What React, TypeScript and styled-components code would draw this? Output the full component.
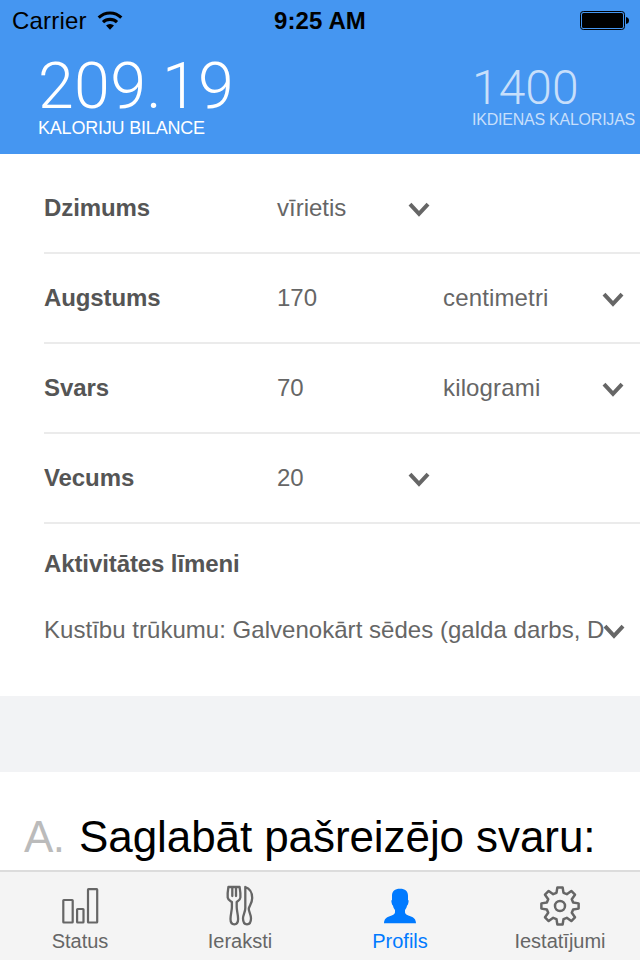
import React from "react";
import styled, { createGlobalStyle } from "styled-components";

const GlobalStyle = createGlobalStyle`
  * { box-sizing: border-box; }
  body {
    margin: 0;
    background: #fff;
    font-family: "Liberation Sans", Arial, sans-serif;
    -webkit-font-smoothing: antialiased;
  }
`;

const Screen = styled.div`
  width: 640px;
  height: 960px;
  display: flex;
  flex-direction: column;
  overflow: hidden;
  background: #fff;
`;

const Header = styled.header`
  flex: none;
  height: 154px;
  background: #4596f1;
  color: #fff;
`;

const StatusBar = styled.div`
  height: 41px;
  padding: 1px 12px 0;
  display: grid;
  grid-template-columns: 1fr auto 1fr;
  align-items: center;
  color: #000;
  font-size: 24px;
  line-height: 40px;
`;

const Carrier = styled.div`
  display: flex;
  align-items: center;
  gap: 10px;
  letter-spacing: 0.2px;
`;

const Clock = styled.div`
  font-weight: 700;
  font-size: 24px;
  letter-spacing: 0.1px;
`;

const BatterySlot = styled.div`
  display: flex;
  justify-content: flex-end;
  margin-right: -2px;
`;

const Balance = styled.div`
  display: flex;
  justify-content: space-between;
  padding: 0 5px 0 38px;
  white-space: nowrap;
`;

const Stat = styled.div<{ $daily?: boolean }>`
  color: ${(p) => (p.$daily ? "#c7dffb" : "#fff")};
  padding-top: ${(p) => (p.$daily ? 23 : 17)}px;
  width: ${(p) => (p.$daily ? 163 : 200)}px;
`;

const StatValue = styled.div<{ $daily?: boolean }>`
  font-family: Roboto, "Liberation Sans", sans-serif;
  font-weight: 300;
  font-size: ${(p) => (p.$daily ? 48 : 64.5)}px;
  line-height: ${(p) => (p.$daily ? 48 : 56)}px;
  letter-spacing: ${(p) => (p.$daily ? 0 : 0.3)}px;
`;

const StatLabel = styled.div<{ $daily?: boolean }>`
  font-size: ${(p) => (p.$daily ? 16 : 18)}px;
  line-height: ${(p) => (p.$daily ? 16 : 20)}px;
  letter-spacing: ${(p) => (p.$daily ? -0.23 : -0.2)}px;
  padding-top: ${(p) => (p.$daily ? 0 : 4)}px;
`;

const Form = styled.section`
  flex: none;
  height: 542px;
  padding: 10px 0 0 44px;
  color: #666;
  font-size: 24px;
`;

const Row = styled.div`
  height: 90px;
  border-bottom: 2px solid #ebebeb;
  display: grid;
  grid-template-columns: 233px 131px 35px 159px 1fr;
  align-items: center;
`;

const Label = styled.div`
  font-weight: 700;
  color: #555;
  letter-spacing: -0.1px;
`;

const UnitName = styled.div`
  white-space: nowrap;
  letter-spacing: 0.15px;
`;

const ChevronSlot = styled.div`
  display: flex;
  padding-top: 3px;
`;

const Activity = styled.div`
  padding-top: 26px;
`;

const ActivitySelect = styled.div`
  display: flex;
  align-items: center;
  height: 30px;
  margin-top: 37px;
`;

const ActivityText = styled.div`
  flex: none;
  width: 559px;
  white-space: nowrap;
  line-height: 30px;
  letter-spacing: 0.03px;
`;

const Divider = styled.div`
  flex: none;
  height: 76px;
  background: #f2f3f5;
`;

const Question = styled.section`
  flex: 1;
  padding: 40px 0 0 24px;
  display: flex;
  gap: 15px;
  font-size: 44px;
  line-height: 50px;
  white-space: nowrap;
`;

const Letter = styled.span`
  color: #bbb;
  width: 40px;
  letter-spacing: -0.5px;
`;

const QuestionText = styled.span`
  color: #000;
  letter-spacing: -0.08px;
`;

const TabBar = styled.nav`
  flex: none;
  height: 90px;
  border-top: 2px solid #dcdcdc;
  background: #f4f4f4;
  display: grid;
  grid-template-columns: repeat(4, 1fr);
`;

const Tab = styled.div<{ $active?: boolean }>`
  display: flex;
  flex-direction: column;
  align-items: center;
  padding-top: 12px;
  color: ${(p) => (p.$active ? "#007aff" : "#666")};
`;

const TabLabel = styled.span`
  font-size: 20px;
  line-height: 24px;
  margin-top: 1px;
`;

const Chevron = () => (
  <ChevronSlot>
    <svg width="22" height="16" viewBox="0 0 22 16" fill="none" stroke="#666" strokeWidth="4">
      <path d="M2 2.2 11 11.8 20 2.2" />
    </svg>
  </ChevronSlot>
);

const Wifi = () => (
  <svg width="26" height="20" viewBox="0 0 26 20">
    <g fill="none" stroke="#000" strokeWidth="3.1">
      <path d="M1.7 6.7a16 16 0 0 1 22.6 0" />
      <path d="M6 11.2a10 10 0 0 1 14 0" />
    </g>
    <path d="M9 14.6a5.8 5.8 0 0 1 8 0L13 18.8Z" />
  </svg>
);

const Battery = () => (
  <svg width="50" height="20" viewBox="0 0 50 20">
    <rect x="0.5" y="0.5" width="44" height="18" rx="2.8" fill="none" stroke="#000" />
    <rect x="2" y="2" width="41" height="15" rx="1.5" />
    <path d="M46 6q3 .5 3 3.5t-3 3.5Z" />
  </svg>
);

const StatusIcon = () => (
  <svg width="40" height="44" viewBox="0 0 40 44" fill="none" stroke="currentColor" strokeWidth="2.2" strokeLinejoin="round">
    <rect x="3.3" y="16" width="9.4" height="22.5" rx=".5" />
    <rect x="17.1" y="25" width="6.4" height="13.5" rx=".5" />
    <rect x="28" y="5.2" width="9.2" height="33.3" rx=".5" />
  </svg>
);

const CutleryIcon = () => (
  <svg width="40" height="44" viewBox="0 0 40 44" fill="none" stroke="currentColor" strokeWidth="2.3" strokeLinejoin="round" strokeLinecap="round">
    <path d="M8.4 3H19.600c.5 3 1 7.500.8 10.500-.2 2.500-2 3.200-3.700 4.500v5c0 4 1.400 7.500 1.400 12 0 3.500-1.400 5.300-3.800 5.300s-3.800-1.800-3.800-5.300c0-4.500 1.400-8 1.400-12v-5c-1.700-1.300-3.900-2-4.200-4.500C7.500 10.500 7.900 6 8.400 3Z" />
    <path d="M12.3 3.500v8.500M16 3.500v8.500" />
    <path d="M25.3 3c4.300 1.500 6.900 6 6.900 11 0 4.500-2.300 7-3.400 10.300-.5 2.700 2.200 6.200 2.200 10 0 3.800-1.600 6-4 6s-4-2.200-4-6c0-3.500 2.300-6.200 2.300-10.300Z" />
  </svg>
);

const ProfileIcon = () => (
  <svg width="40" height="44" viewBox="0 0 40 44" fill="currentColor">
    <path d="M20 4.800c5.200 0 8 2.300 8 7v4c.8.3.7 2 .3 3.200-.3 1.300-.6 2.300-1.300 2.600-.3 2-1 3.400-2 4.500v2.400c.3 1.800 2.500 2.700 5.300 3.700 3.700 1.200 5.500 3 5.700 7H4c.2-4 2-5.800 5.700-7 2.800-1 5-1.900 5.300-3.700v-2.400c-1-1.100-1.700-2.500-2-4.500-.7-.3-1-1.300-1.300-2.600-.4-1.200-.5-2.900.3-3.200v-4c0-4.700 2.800-7 8-7Z" />
  </svg>
);

const TEETH = 8;

// Each tooth is a trapezoid given by radius and angle around the hub.
const gearPath = (() => {
  const profile = [
    [13.6, -15],
    [18.8, -8],
    [18.8, 8],
    [13.6, 15],
  ];
  const points: string[] = [];
  for (let i = 0; i < TEETH; i++) {
    for (const [radius, offset] of profile) {
      const angle = ((i * 360) / TEETH + offset) * (Math.PI / 180);
      points.push(`${(21 + radius * Math.sin(angle)).toFixed(2)} ${(22 - radius * Math.cos(angle)).toFixed(2)}`);
    }
  }
  return `M${points.join("L")}Z`;
})();

const GearIcon = () => (
  <svg width="42" height="44" viewBox="0 0 42 44" fill="none" stroke="currentColor" strokeWidth="2.5" strokeLinejoin="round">
    <path d={gearPath} />
    <circle cx="21" cy="22" r="5" />
  </svg>
);

const fields = [
  { label: "Dzimums", value: "vīrietis" },
  { label: "Augstums", value: "170", unit: "centimetri" },
  { label: "Svars", value: "70", unit: "kilogrami" },
  { label: "Vecums", value: "20" },
];

const tabs = [
  { label: "Status", Icon: StatusIcon },
  { label: "Ieraksti", Icon: CutleryIcon },
  { label: "Profils", Icon: ProfileIcon, active: true },
  { label: "Iestatījumi", Icon: GearIcon },
];

export default function App() {
  return (
    <>
      <GlobalStyle />
      <Screen>
        <Header>
          <StatusBar>
            <Carrier>
              Carrier
              <Wifi />
            </Carrier>
            <Clock>9:25 AM</Clock>
            <BatterySlot>
              <Battery />
            </BatterySlot>
          </StatusBar>
          <Balance>
            <Stat>
              <StatValue>209.19</StatValue>
              <StatLabel>KALORIJU BILANCE</StatLabel>
            </Stat>
            <Stat $daily>
              <StatValue $daily>1400</StatValue>
              <StatLabel $daily>IKDIENAS KALORIJAS</StatLabel>
            </Stat>
          </Balance>
        </Header>
        <Form>
          {fields.map((f) => (
            <Row key={f.label}>
              <Label>{f.label}</Label>
              <div>{f.value}</div>
              {f.unit ? <span /> : <Chevron />}
              <UnitName>{f.unit}</UnitName>
              {f.unit && <Chevron />}
            </Row>
          ))}
          <Activity>
            <Label>Aktivitātes līmeni</Label>
            <ActivitySelect>
              <ActivityText>Kustību trūkumu: Galvenokārt sēdes (galda darbs, D</ActivityText>
              <Chevron />
            </ActivitySelect>
          </Activity>
        </Form>
        <Divider />
        <Question>
          <Letter>A.</Letter>
          <QuestionText>Saglabāt pašreizējo svaru:</QuestionText>
        </Question>
        <TabBar>
          {tabs.map(({ label, Icon, active }) => (
            <Tab key={label} $active={active}>
              <Icon />
              <TabLabel>{label}</TabLabel>
            </Tab>
          ))}
        </TabBar>
      </Screen>
    </>
  );
}
